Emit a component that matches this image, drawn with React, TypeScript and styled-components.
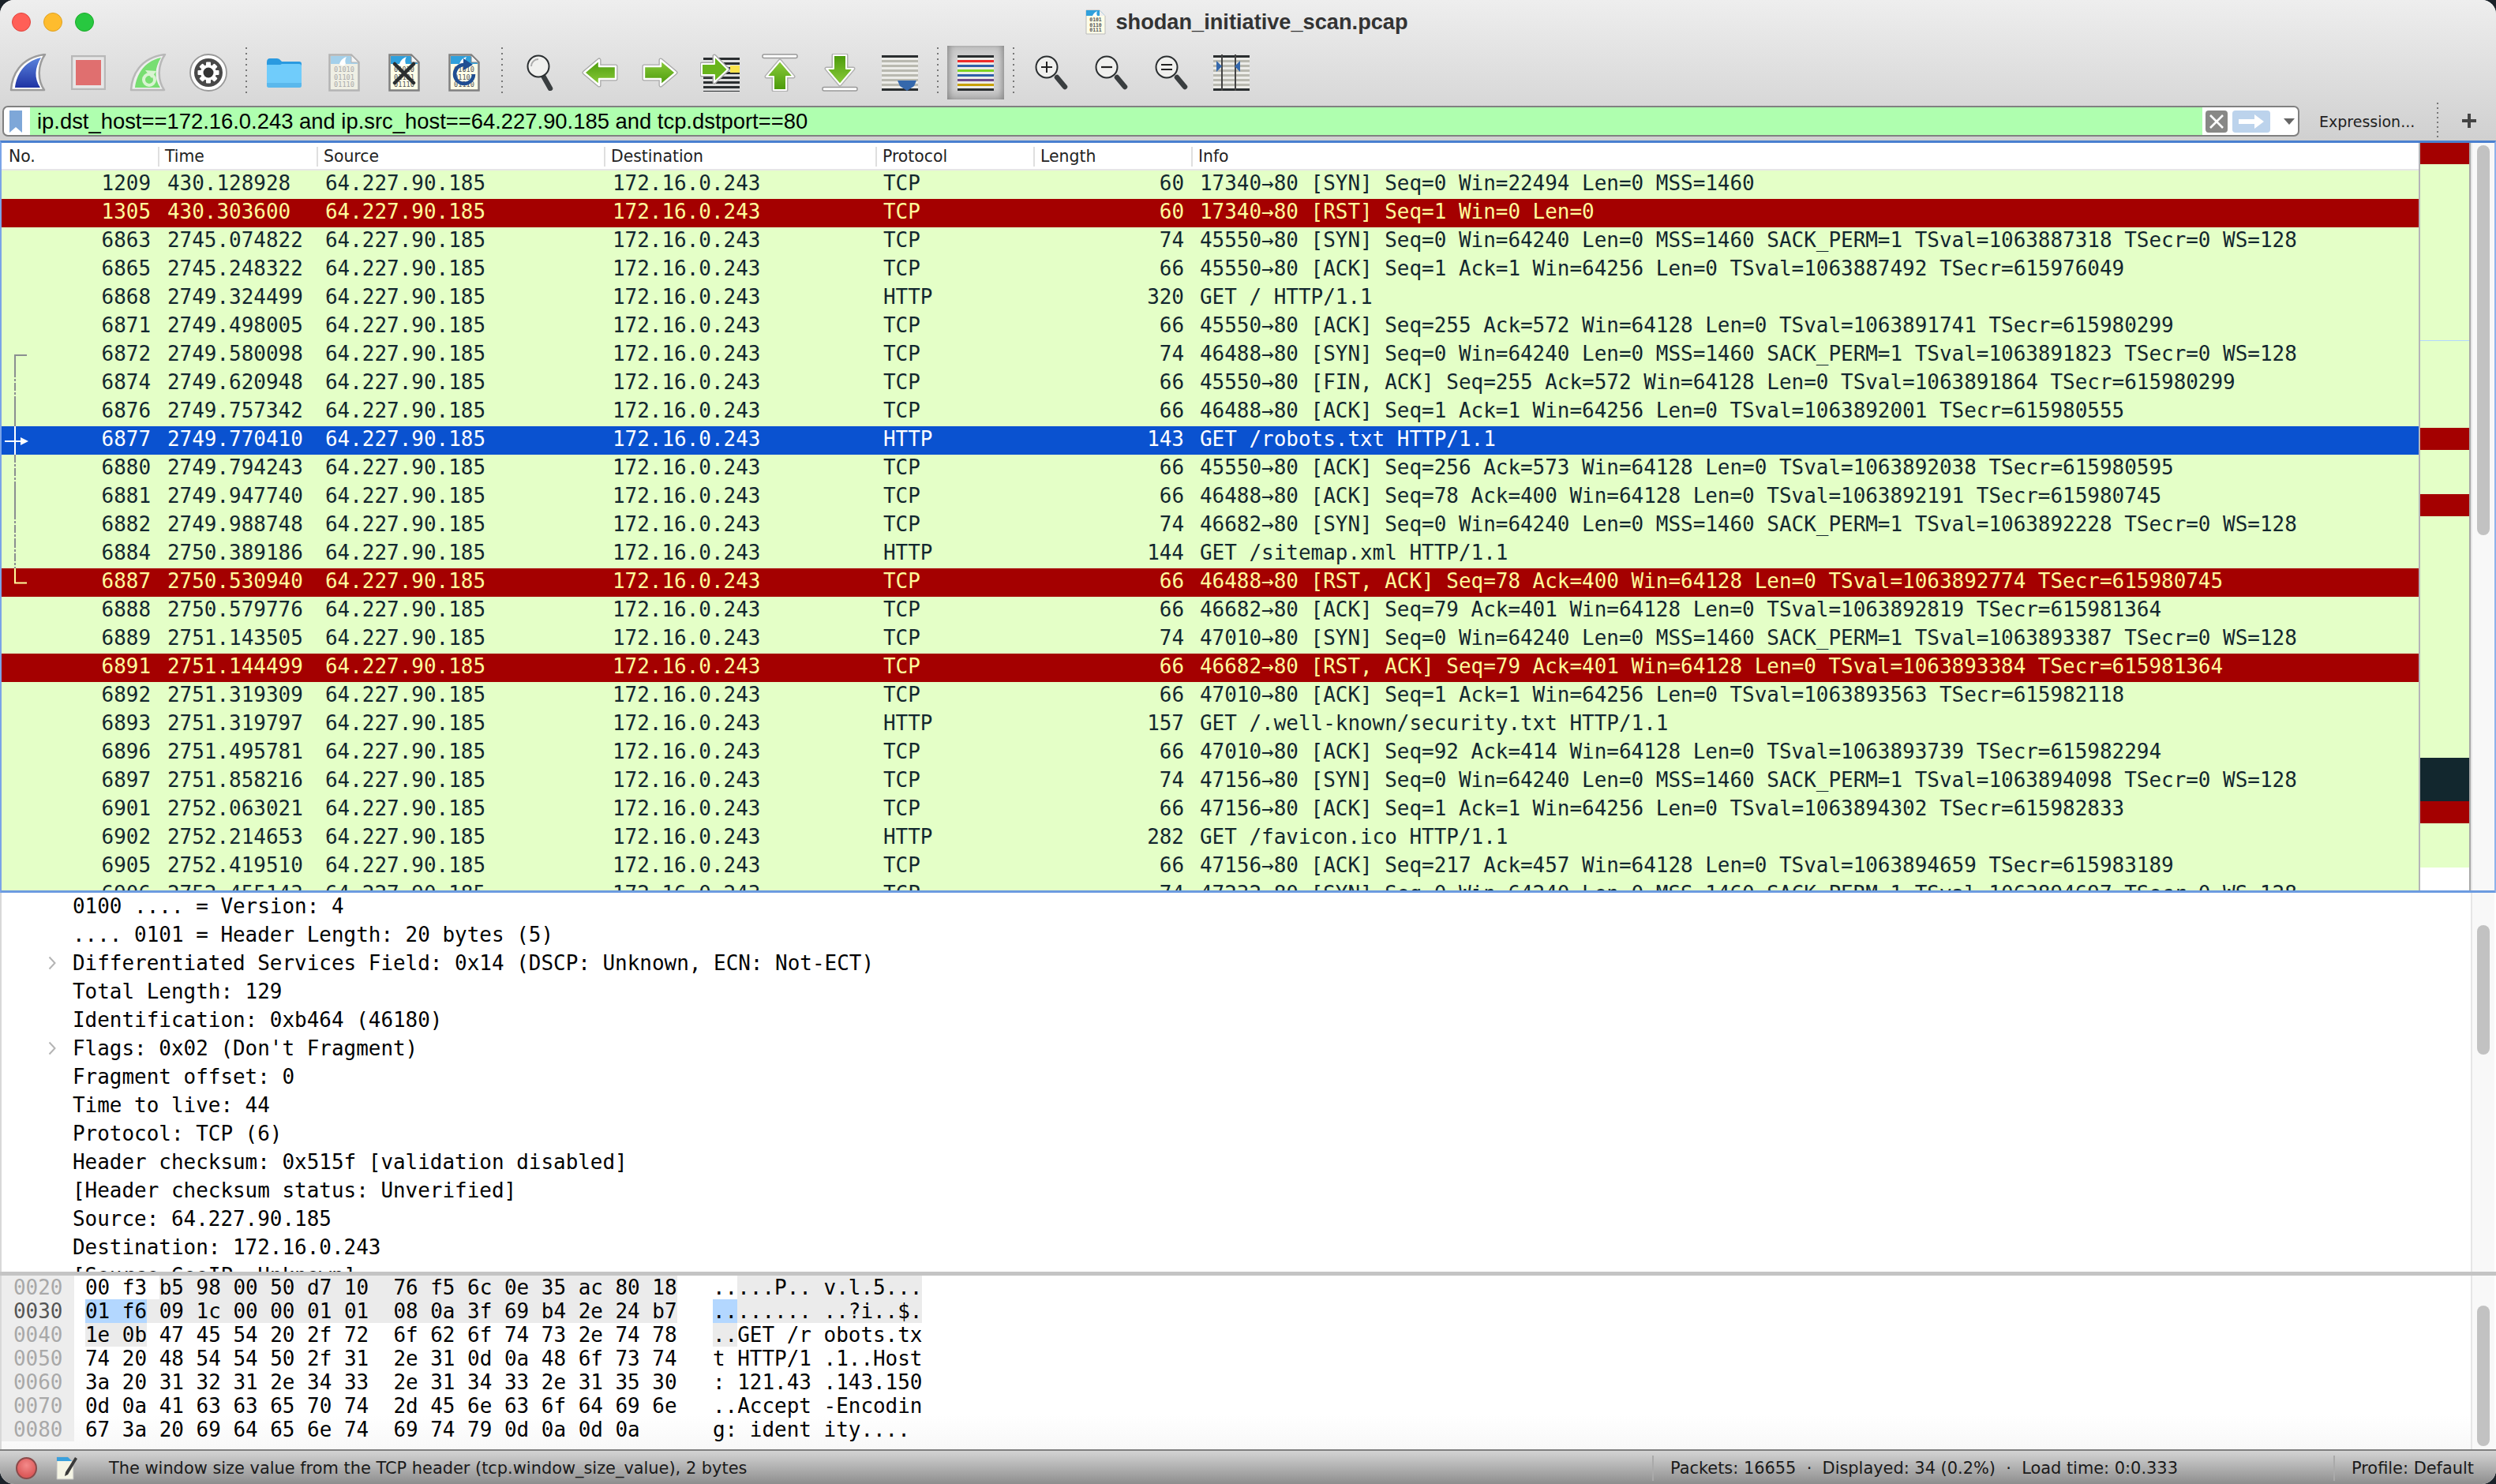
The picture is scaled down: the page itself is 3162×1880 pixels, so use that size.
import React from "react";
import styled, { createGlobalStyle } from "styled-components";

const Global = createGlobalStyle`
  html, body { margin: 0; padding: 0; background: #1b2229; }
  #root { width: 3162px; height: 1880px; }
  * { box-sizing: border-box; }
`;

const mono = `"DejaVu Sans Mono", "Liberation Mono", monospace`;
const sans = `"DejaVu Sans", "Liberation Sans", sans-serif`;
const helv = `"Liberation Sans", Arial, sans-serif`;

const Win = styled.div`
  width: 3162px; height: 1880px; display: flex; flex-direction: column;
  background: #fff; border-radius: 18px; overflow: hidden;
`;
const Chrome = styled.div`
  height: 178px; display: flex; flex-direction: column; flex: none;
  background: linear-gradient(#eeeeee, #d0d0d0);
`;
const TitleBar = styled.div`
  height: 56px; flex: none; display: grid; grid-template-columns: 1fr auto 1fr; align-items: center;
`;
const Lights = styled.div`display: flex; gap: 16px; padding-left: 15px;`;
const Light = styled.span<{ $c: string; $b: string }>`
  width: 24px; height: 24px; border-radius: 50%; background: ${p => p.$c}; border: 1px solid ${p => p.$b};
`;
const Title = styled.div`
  display: flex; align-items: center; gap: 12px; font: bold 27.2px ${helv}; color: #333; padding-right: 3px;
`;
const Toolbar = styled.div`height: 74px; flex: none; display: flex; align-items: flex-start; gap: 4px; padding-top: 2px;`;
const Slot = styled.div<{ $pressed?: boolean }>`
  width: 72px; height: 68px; flex: none; display: flex; align-items: center; justify-content: center;
  ${p => p.$pressed ? `background: linear-gradient(#c4c4c4, #d4d4d4 30%, #d0d0d0 80%, #b0b0b0); box-shadow: inset 6px 0 8px -4px #808080, inset -6px 0 8px -4px #808080;` : ""}
`;
const Sep = styled.div`
  width: 16px; height: 62px; flex: none; align-self: flex-start; margin-top: 2px;
  background: repeating-linear-gradient(#777 0 2px, transparent 2px 7px) center / 2px 100% no-repeat;
`;
const FilterRow = styled.div`height: 48px; flex: none; display: flex; align-items: flex-start; padding: 4px 0 0 3px;`;
const FilterBox = styled.div`
  width: 2910px; height: 39px; flex: none; display: flex; align-items: stretch;
  background: #fff; border: 2px solid #808080; border-radius: 7px; overflow: hidden;
`;
const BookBtn = styled.div`width: 33px; flex: none; display: flex; align-items: center; justify-content: center; padding-right: 3px;`;
const FilterText = styled.div`
  flex: 1; background: #afffaf; font: 27.4px/35px ${helv}; color: #000; padding-left: 9px; white-space: pre;
`;
const BoxBtns = styled.div`width: 121px; flex: none; display: flex; align-items: center; padding-left: 4px; gap: 6px;`;
const ClearBtn = styled.div`
  width: 28px; height: 28px; border-radius: 4px; background: #888886; display: flex; align-items: center; justify-content: center;
`;
const ApplyBtn = styled.div`
  width: 48px; height: 28px; border-radius: 4px; background: #bcd3ec; display: flex; align-items: center; justify-content: center;
`;
const Caret = styled.div`
  margin-left: 11px; width: 0; height: 0;
  border-left: 7px solid transparent; border-right: 7px solid transparent; border-top: 8px solid #666;
`;
const Expr = styled.div`
  width: 174px; flex: none; padding: 5px 0 0 25px; font: 19px/30px ${sans}; color: #222; white-space: pre;
`;
const FilterSep = styled.div`
  width: 2px; height: 44px; flex: none; margin-top: -4px;
  background: repeating-linear-gradient(#777 0 2px, transparent 2px 6px);
`;
const Plus = styled.div`flex: 1; display: flex; justify-content: center; padding-top: 10px; padding-left: 5px;`;

const ListPane = styled.div`
  height: 954px; flex: none; display: flex;
  border-top: 3px solid #4a80d0; border-bottom: 4px solid #6c9be0; border-left: 2px solid #7aa4e8; border-right: 2px solid #8fb2ea;
`;
const ListCol = styled.div`width: 3062px; flex: none; display: flex; flex-direction: column; overflow: hidden;`;
const cols = "198px 201px 364px 344px 200px 200px 1fr";
const Header = styled.div`
  height: 35px; flex: none; display: grid; grid-template-columns: ${cols}; background: #fff;
  border-bottom: 2px solid #e6e6e6;
`;
const HCell = styled.div<{ $first?: boolean }>`
  font: 20.4px/27px ${sans}; color: #222; padding: 4px 0 0 9px; position: relative;
  &::before { content: ""; display: ${p => p.$first ? "none" : "block"}; position: absolute; left: 0; top: 5px; bottom: 3px; width: 2px; background: #dfdfdf; }
`;
const Rows = styled.div`flex: 1; overflow: hidden;`;
const Row = styled.div<{ $kind: string }>`
  height: 36px; display: grid; grid-template-columns: ${cols}; white-space: pre;
  font: 25.94px/33px ${mono};
  background: ${p => p.$kind === "red" ? "#a40000" : p.$kind === "sel" ? "#0a52d0" : "#e4ffc7"};
  color: ${p => p.$kind === "red" ? "#fffc9c" : p.$kind === "sel" ? "#fff" : "#12272e"};
`;
const Cell = styled.div<{ $right?: boolean; $pl?: number }>`
  position: relative; overflow: hidden;
  padding: 0 ${p => p.$right ? 9 : 0}px 0 ${p => p.$pl ?? 0}px;
  text-align: ${p => p.$right ? "right" : "left"};
`;
const Conv = styled.svg`position: absolute; left: 0; top: 0; display: block;`;

const Overview = styled.div`
  width: 66px; flex: none; display: flex; flex-direction: column; background: #fff;
  border-left: 2px solid #b4b4b8; border-right: 2px solid #a8a8a8;
`;
const Seg = styled.div<{ $h: number; $c: string }>`height: ${p => p.$h}px; flex: none; background: ${p => p.$c};`;
const Track = styled.div<{ $top: number }>`
  width: 30px; flex: none; background: #f8f8f8; border-left: 2px solid #e6e6e6; padding: ${p => p.$top}px 0 0 6px;
`;
const Thumb = styled.div<{ $h: number }>`width: 16px; height: ${p => p.$h}px; border-radius: 8px; background: #c2c2c2;`;

const DetailPane = styled.div`height: 480px; flex: none; display: flex; overflow: hidden; border-left: 2px solid #d8d8d8; justify-content: space-between; padding-right: 2px; background: #fff; margin-top: -1px;`;
const DetailList = styled.div`flex: 1; overflow: hidden;`;
const DetailRow = styled.div`
  height: 36px; display: flex; font: 25.94px/35px ${mono}; color: #000; white-space: pre;
`;
const Gutter = styled.div`width: 90px; flex: none; display: flex; align-items: center; justify-content: flex-end; padding-right: 21px; padding-bottom: 2px;`;

const Splitter = styled.div`height: 5px; flex: none; background: #c4c4c4;`;
const HexPane = styled.div`height: 220px; flex: none; display: flex; overflow: hidden; background: linear-gradient(#fff 80%, #f8f8f8); justify-content: space-between; padding-right: 2px; border-left: 2px solid #d8d8d8;`;
const HexList = styled.div`flex: 1; overflow: hidden;`;
const HexRow = styled.div`display: flex; height: 30px; font: 25.94px/30px ${mono}; white-space: pre; color: #000;`;
const Offset = styled.div<{ $active?: boolean }>`
  width: 92px; flex: none; background: #ededed; padding-left: 15px; color: ${p => p.$active ? "#555" : "#a8a8a8"};
`;
const HexBytes = styled.div`width: 809px; flex: none; padding-left: 14px;`;
const Hl = styled.span<{ $k?: string }>`
  display: inline-block; height: 30px;
  background: ${p => p.$k === "b" ? "#b3d7ff" : p.$k === "g" ? "#ebebeb" : "transparent"};
`;
const Status = styled.div`
  height: 44px; flex: none; display: flex; align-items: center; position: relative; padding-top: 1px;
  border-top: 2px solid #7f7f7f; background: linear-gradient(#d4d4d4, #8e8e8e);
  font: 20.9px/24px ${sans}; color: #1a1a1a; white-space: pre;
`;
const Led = styled.div`
  width: 27px; height: 28px; border-radius: 50%; margin-left: 20px; flex: none;
  background: radial-gradient(circle at 50% 35%, #f48a8a, #dc5a5a 70%); border: 2px solid #8a4a4a;
`;
const Pen = styled.div`width: 30px; margin-left: 24px; flex: none; display: flex;`;
const StatusMsg = styled.div`margin-left: 37px; width: 1955px; flex: none;`;
const StatusSep = styled.div`width: 2px; height: 32px; background: #aaa; flex: none;`;
const Stats = styled.div`margin-left: 21px; width: 840px; flex: none;`;
const Profile = styled.div`margin-left: 21px;`;

/* ---------- icons ---------- */
const FIN = "M2 46 C3 28 13 5 45 1 C36 14 35 33 44 46 Z";
const FIN_IN = "M7 43 C9 28 17 10 40 5 C32 18 31 31 39 43 Z";
const StartIcon = () => (
  <svg width="48" height="48" viewBox="0 0 48 48">
    <defs><linearGradient id="fb" x1="0" y1="0" x2="0" y2="1"><stop offset="0" stopColor="#5a83dc" /><stop offset="1" stopColor="#1f33a4" /></linearGradient></defs>
    <path d={FIN} fill="#fff" stroke="#9c9c9c" strokeWidth="2.5" strokeLinejoin="round" />
    <path d={FIN_IN} fill="url(#fb)" />
  </svg>
);
const StopIcon = () => (
  <svg width="44" height="44" viewBox="0 0 44 44">
    <rect x="1" y="1" width="42" height="42" fill="#e6e6e6" stroke="#b8b8b8" strokeWidth="2.5" />
    <rect x="6" y="6" width="32" height="32" fill="#e06f6f" />
  </svg>
);
const RestartIcon = () => (
  <svg width="48" height="48" viewBox="0 0 48 48">
    <path d={FIN} fill="#eee" stroke="#b8b8b8" strokeWidth="2.5" strokeLinejoin="round" />
    <path d={FIN_IN} fill="#78de72" />
    <circle cx="25" cy="33" r="7" fill="none" stroke="#d9f4d2" strokeWidth="4" />
    <path d="M20 21 L34 22 L28 31 Z" fill="#d9f4d2" />
  </svg>
);
const GearIcon = () => {
  const teeth = Array.from({ length: 8 }, (_, i) => i * 45);
  return (
    <svg width="48" height="48" viewBox="0 0 48 48">
      <circle cx="24" cy="24" r="23" fill="#fff" stroke="#999" strokeWidth="1.8" />
      <circle cx="24" cy="24" r="18" fill="#484848" />
      {teeth.map(a => <rect key={a} x="21" y="10.5" width="6" height="6" rx="1" fill="#fff" transform={`rotate(${a} 24 24)`} />)}
      <circle cx="24" cy="24" r="10" fill="#fff" />
      <circle cx="24" cy="24" r="6.5" fill="#333" />
    </svg>
  );
};
const FolderIcon = () => (
  <svg width="46" height="40" viewBox="0 0 46 40">
    <path d="M1 7 Q1 2 5 2 L14 2 Q17 2 19 5 L20 6 L42 6 Q45 6 45 9 L45 14 L1 14 Z" fill="#2a9ae0" />
    <path d="M1 10 L18 10 L20 9 L42 9 Q45 9 45 12 L45 36 Q45 39 42 39 L4 39 Q1 39 1 36 Z" fill="#70ccfb" />
    <path d="M1 36 Q1 39 4 39 L42 39 Q45 39 45 36 L45 33 L1 33 Z" fill="#5ab8ec" />
  </svg>
);
const Doc: React.FC<{ id: string; faded?: boolean; children?: React.ReactNode }> = ({ id, faded, children }) => {
  const stroke = faded ? "#b4b4b4" : "#808080";
  const paper = faded ? "#efefe4" : "#fdfde8";
  const top = faded ? "#a4d0ea" : "#30a0dc";
  const ink = faded ? "#aaa" : "#555";
  return (
    <svg width="40" height="48" viewBox="0 0 40 48">
      <path d="M1.5 1.5 L29 1.5 L38.5 11 L38.5 46.5 L1.5 46.5 Z" fill={paper} stroke={stroke} strokeWidth="2.5" />
      <path d="M3 3 L28 3 L37 12 L37 13 L3 13 Z" fill={top} />
      <path d="M29 2 L29 11 L38 11 Z" fill="#f4f4f4" stroke={stroke} strokeWidth="1" />
      <path d="M14 13 C16 7 20 5 23 4 C21 7 21 10 22 13 C19 16 17 16 14 13 Z" fill="#fff" />
      {["01010", "01101", "01110"].map((t, i) => (
        <text key={t + id} x="20" y={23 + i * 9.5} textAnchor="middle" fontFamily={mono} fontSize="8.6" fill={ink}>{t}</text>
      ))}
      {children}
    </svg>
  );
};
const ARROW = "M3 11 L24 11 L24 3 L43 19 L24 35 L24 27 L3 27 Z";
const ArrowShape: React.FC<{ rot: number; id: string }> = ({ rot, id }) => (
  <svg width="46" height="38" viewBox="0 0 46 38">
    <defs><linearGradient id={id} x1="0" y1="0" x2="0" y2="1"><stop offset="0" stopColor="#8ccc3c" /><stop offset="1" stopColor="#4a9a0a" /></linearGradient></defs>
    <g transform={`rotate(${rot} 23 19)`}>
      <path d={ARROW} fill="none" stroke="#a8a8a8" strokeWidth="5" strokeLinejoin="round" />
      <path d={ARROW} fill={`url(#${id})`} stroke="#fff" strokeWidth="2.4" strokeLinejoin="round" />
    </g>
  </svg>
);
const Lines: React.FC<{ rows: string[]; children?: React.ReactNode; w?: number }> = ({ rows, children, w = 46 }) => (
  <svg width={w} height="46" viewBox={`0 0 ${w} 46`}>
    <rect x="0" y="1" width={w} height="44" fill="#ecece8" />
    {rows.map((c, i) => <rect key={i} x={w - 46} y={1 + i * 6} width="46" height="3" fill={c} />)}
    {children}
  </svg>
);
const GotoIcon = () => (
  <svg width="50" height="48" viewBox="0 0 50 48">
    {Array.from({ length: 8 }, (_, i) => <rect key={i} x="4" y={5 + i * 6} width="46" height="3" fill="#2a2e30" />)}
    <rect x="38" y="15" width="12" height="9" fill="#fbe44c" />
    <path d="M2 13 L18 13 L18 3 L35 20 L18 36 L18 27 L2 27 Z" fill="none" stroke="#a8a8a8" strokeWidth="5" strokeLinejoin="round" />
    <path d="M2 13 L18 13 L18 3 L35 20 L18 36 L18 27 L2 27 Z" fill="#68b41c" stroke="#fff" strokeWidth="2" strokeLinejoin="round" />
  </svg>
);
const UP = "M15 46 L15 29 L6 29 L23 9 L40 29 L31 29 L31 46 Z";
const FirstIcon: React.FC<{ down?: boolean; id: string }> = ({ down, id }) => (
  <svg width="46" height="48" viewBox="0 0 46 48">
    <defs><linearGradient id={id} x1="0" y1="0" x2="0" y2="1"><stop offset="0" stopColor="#8ccc3c" /><stop offset="1" stopColor="#4a9a0a" /></linearGradient></defs>
    <g transform={down ? "rotate(180 23 24)" : undefined}>
      <rect x="1" y="1" width="44" height="4.5" rx="2" fill="#fff" stroke="#999" strokeWidth="1.5" />
      <path d={UP} fill="none" stroke="#b0b0b0" strokeWidth="5" strokeLinejoin="round" />
      <path d={UP} fill={`url(#${id})`} stroke="#fff" strokeWidth="2" strokeLinejoin="round" />
    </g>
  </svg>
);
const GR = "#b9b9b0";
const DK = "#2a2e30";
const LastIcon = () => (
  <Lines rows={[DK, GR, GR, GR, GR, GR, GR, DK]}>
    <path d="M20 33 L44 33 L41 40 L32 46 L23 40 Z" fill="#3568ac" />
  </Lines>
);
const ColorIcon = () => (
  <Lines rows={[DK, "#ee2a2a", "#2f5fa8", "#7ed321", "#2f5fa8", "#6e4a8a", "#c8a000", DK]} />
);
const Mag: React.FC<{ sign?: string }> = ({ sign }) => (
  <svg width="42" height="44" viewBox="0 0 42 44">
    <line x1="28" y1="28" x2="38" y2="40" stroke="#3a3e40" strokeWidth="6.5" strokeLinecap="round" />
    <circle cx="15" cy="15" r="13.5" fill="#f0f0ee" stroke="#2a2e30" strokeWidth="2" />
    {sign === "+" && <path d="M8 15 H22 M15 8 V22" stroke="#222" strokeWidth="2" />}
    {sign === "-" && <path d="M8 15 H22" stroke="#222" strokeWidth="2.2" />}
    {sign === "=" && <path d="M8 12 H22 M8 18 H22" stroke="#222" strokeWidth="2.2" />}
  </svg>
);
const SearchIcon = () => (
  <svg width="34" height="46" viewBox="0 0 34 46">
    <line x1="21" y1="27" x2="30" y2="43" stroke="#3a3e40" strokeWidth="6.5" strokeLinecap="round" />
    <circle cx="15" cy="15" r="13.5" fill="#f0f0ee" stroke="#2a2e30" strokeWidth="2" />
    <path d="M6 15 A9 9 0 0 1 15 6" fill="none" stroke="#aaa" strokeWidth="2" />
  </svg>
);
const ResizeIcon = () => (
  <Lines rows={[DK, GR, GR, GR, GR, GR, GR, DK]}>
    <rect x="10" y="0" width="2" height="46" fill="#444" />
    <rect x="27" y="0" width="2" height="46" fill="#444" />
    <path d="M4 8 L11 15 L4 22 Z" fill="#3568ac" />
    <path d="M34 8 L27 15 L34 22 Z" fill="#3568ac" />
  </Lines>
);
const TitleDoc = () => (
  <svg width="26" height="32" viewBox="0 0 26 32">
    <path d="M1 1 L18 1 L25 8 L25 31 L1 31 Z" fill="#fdfde8" stroke="#bbb" />
    <path d="M1 1 L18 1 L24 7 L24 8 L1 8 Z" fill="#30a0dc" />
    <path d="M9 8 C10 5 13 3 15 2 C14 4 14 6 15 8 Z" fill="#fff" />
    <path d="M18 1 L18 8 L25 8 Z" fill="#eee" />
    {["0101", "0110", "0111"].map((t, i) => <text key={t} x="13" y={15 + i * 6.6} textAnchor="middle" fontFamily={mono} fontSize="6.4" fill="#555">{t}</text>)}
  </svg>
);
const Chevron = () => (
  <svg width="10" height="18" viewBox="0 0 10 18"><path d="M1.5 1.5 L8.5 9 L1.5 16.5" fill="none" stroke="#b4b4b4" strokeWidth="2" /></svg>
);

/* ---------- data ---------- */
type Pkt = [string, string, string, string, string, string?, string?];
const packets: Pkt[] = [
  ["1209", "430.128928", "TCP", "60", "17340→80 [SYN] Seq=0 Win=22494 Len=0 MSS=1460"],
  ["1305", "430.303600", "TCP", "60", "17340→80 [RST] Seq=1 Win=0 Len=0", "red"],
  ["6863", "2745.074822", "TCP", "74", "45550→80 [SYN] Seq=0 Win=64240 Len=0 MSS=1460 SACK_PERM=1 TSval=1063887318 TSecr=0 WS=128"],
  ["6865", "2745.248322", "TCP", "66", "45550→80 [ACK] Seq=1 Ack=1 Win=64256 Len=0 TSval=1063887492 TSecr=615976049"],
  ["6868", "2749.324499", "HTTP", "320", "GET / HTTP/1.1"],
  ["6871", "2749.498005", "TCP", "66", "45550→80 [ACK] Seq=255 Ack=572 Win=64128 Len=0 TSval=1063891741 TSecr=615980299"],
  ["6872", "2749.580098", "TCP", "74", "46488→80 [SYN] Seq=0 Win=64240 Len=0 MSS=1460 SACK_PERM=1 TSval=1063891823 TSecr=0 WS=128", "", "start"],
  ["6874", "2749.620948", "TCP", "66", "45550→80 [FIN, ACK] Seq=255 Ack=572 Win=64128 Len=0 TSval=1063891864 TSecr=615980299", "", "dash"],
  ["6876", "2749.757342", "TCP", "66", "46488→80 [ACK] Seq=1 Ack=1 Win=64256 Len=0 TSval=1063892001 TSecr=615980555", "", "mid"],
  ["6877", "2749.770410", "HTTP", "143", "GET /robots.txt HTTP/1.1", "sel", "sel"],
  ["6880", "2749.794243", "TCP", "66", "45550→80 [ACK] Seq=256 Ack=573 Win=64128 Len=0 TSval=1063892038 TSecr=615980595", "", "dash"],
  ["6881", "2749.947740", "TCP", "66", "46488→80 [ACK] Seq=78 Ack=400 Win=64128 Len=0 TSval=1063892191 TSecr=615980745", "", "mid"],
  ["6882", "2749.988748", "TCP", "74", "46682→80 [SYN] Seq=0 Win=64240 Len=0 MSS=1460 SACK_PERM=1 TSval=1063892228 TSecr=0 WS=128", "", "dash"],
  ["6884", "2750.389186", "HTTP", "144", "GET /sitemap.xml HTTP/1.1", "", "dash"],
  ["6887", "2750.530940", "TCP", "66", "46488→80 [RST, ACK] Seq=78 Ack=400 Win=64128 Len=0 TSval=1063892774 TSecr=615980745", "red", "end"],
  ["6888", "2750.579776", "TCP", "66", "46682→80 [ACK] Seq=79 Ack=401 Win=64128 Len=0 TSval=1063892819 TSecr=615981364"],
  ["6889", "2751.143505", "TCP", "74", "47010→80 [SYN] Seq=0 Win=64240 Len=0 MSS=1460 SACK_PERM=1 TSval=1063893387 TSecr=0 WS=128"],
  ["6891", "2751.144499", "TCP", "66", "46682→80 [RST, ACK] Seq=79 Ack=401 Win=64128 Len=0 TSval=1063893384 TSecr=615981364", "red"],
  ["6892", "2751.319309", "TCP", "66", "47010→80 [ACK] Seq=1 Ack=1 Win=64256 Len=0 TSval=1063893563 TSecr=615982118"],
  ["6893", "2751.319797", "HTTP", "157", "GET /.well-known/security.txt HTTP/1.1"],
  ["6896", "2751.495781", "TCP", "66", "47010→80 [ACK] Seq=92 Ack=414 Win=64128 Len=0 TSval=1063893739 TSecr=615982294"],
  ["6897", "2751.858216", "TCP", "74", "47156→80 [SYN] Seq=0 Win=64240 Len=0 MSS=1460 SACK_PERM=1 TSval=1063894098 TSecr=0 WS=128"],
  ["6901", "2752.063021", "TCP", "66", "47156→80 [ACK] Seq=1 Ack=1 Win=64256 Len=0 TSval=1063894302 TSecr=615982833"],
  ["6902", "2752.214653", "HTTP", "282", "GET /favicon.ico HTTP/1.1"],
  ["6905", "2752.419510", "TCP", "66", "47156→80 [ACK] Seq=217 Ack=457 Win=64128 Len=0 TSval=1063894659 TSecr=615983189"],
  ["6906", "2752.455143", "TCP", "74", "47232→80 [SYN] Seq=0 Win=64240 Len=0 MSS=1460 SACK_PERM=1 TSval=1063894697 TSecr=0 WS=128"],
];

const ConvMark: React.FC<{ rel?: string }> = ({ rel }) => {
  if (!rel) return null;
  const gray = "#8a8f90";
  const x = 17;
  return (
    <Conv width="40" height="36" viewBox="0 0 40 36">
      {rel === "start" && <path d={`M32 18 H${x} V36`} fill="none" stroke={gray} strokeWidth="2" />}
      {rel === "mid" && <path d={`M${x} 0 V36`} stroke={gray} strokeWidth="2" />}
      {rel === "dash" && <path d={`M${x} 0 V36`} stroke={gray} strokeWidth="2" strokeDasharray="10 2 3 2" />}
      {rel === "sel" && (
        <g>
          <path d={`M${x} 0 V36`} stroke="#fff" strokeWidth="2" />
          <path d="M4 19 H26" stroke="#fff" strokeWidth="2" />
          <path d="M24 14 L34 19 L24 24 Z" fill="#fff" />
        </g>
      )}
      {rel === "end" && <path d={`M${x} 0 V18.5 H32`} fill="none" stroke="#fffc9c" strokeWidth="2" />}
    </Conv>
  );
};

const details: [string, boolean?][] = [
  ["0100 .... = Version: 4"],
  [".... 0101 = Header Length: 20 bytes (5)"],
  ["Differentiated Services Field: 0x14 (DSCP: Unknown, ECN: Not-ECT)", true],
  ["Total Length: 129"],
  ["Identification: 0xb464 (46180)"],
  ["Flags: 0x02 (Don't Fragment)", true],
  ["Fragment offset: 0"],
  ["Time to live: 44"],
  ["Protocol: TCP (6)"],
  ["Header checksum: 0x515f [validation disabled]"],
  ["[Header checksum status: Unverified]"],
  ["Source: 64.227.90.185"],
  ["Destination: 172.16.0.243"],
  ["[Source GeoIP: Unknown]"],
];

type HexPart = [string, string?];
const hexRows: { off: string; active?: boolean; hex: HexPart[]; asc: HexPart[] }[] = [
  { off: "0020", hex: [["00 f3 "], ["b5 98 00 50 d7 10  76 f5 6c 0e 35 ac 80 18", "g"]], asc: [[".."], ["...P.. v.l.5...", "g"]] },
  { off: "0030", active: true, hex: [["01 f6", "b"], [" 09 1c 00 00 01 01  08 0a 3f 69 b4 2e 24 b7", "g"]], asc: [["..", "b"], ["...... ..?i..$.", "g"]] },
  { off: "0040", hex: [["1e 0b", "g"], [" 47 45 54 20 2f 72  6f 62 6f 74 73 2e 74 78"]], asc: [["..", "g"], ["GET /r obots.tx"]] },
  { off: "0050", hex: [["74 20 48 54 54 50 2f 31  2e 31 0d 0a 48 6f 73 74"]], asc: [["t HTTP/1 .1..Host"]] },
  { off: "0060", hex: [["3a 20 31 32 31 2e 34 33  2e 31 34 33 2e 31 35 30"]], asc: [[": 121.43 .143.150"]] },
  { off: "0070", hex: [["0d 0a 41 63 63 65 70 74  2d 45 6e 63 6f 64 69 6e"]], asc: [["..Accept -Encodin"]] },
  { off: "0080", hex: [["67 3a 20 69 64 65 6e 74  69 74 79 0d 0a 0d 0a"]], asc: [["g: ident ity...."]] },
];

const overview: [number, string][] = [
  [27, "#a40000"], [223, "#e4ffc7"], [1, "#b3d7ff"], [110, "#e4ffc7"], [28, "#a40000"], [56, "#e4ffc7"], [28, "#a40000"],
  [306, "#e4ffc7"], [55, "#12272e"], [28, "#a40000"], [56, "#e4ffc7"],
];

export default function App() {
  return (
    <>
      <Global />
      <Win>
        <Chrome>
          <TitleBar>
            <Lights>
              <Light $c="#ff5f57" $b="#e0443e" />
              <Light $c="#febc2e" $b="#dea123" />
              <Light $c="#28c840" $b="#1aab29" />
            </Lights>
            <Title><TitleDoc />shodan_initiative_scan.pcap</Title>
            <div />
          </TitleBar>
          <Toolbar>
            <Slot><StartIcon /></Slot>
            <Slot><StopIcon /></Slot>
            <Slot><RestartIcon /></Slot>
            <Slot><GearIcon /></Slot>
            <Sep />
            <Slot><FolderIcon /></Slot>
            <Slot><Doc id="a" faded /></Slot>
            <Slot>
              <Doc id="b">
                <path d="M8 13 L32 37 M32 13 L8 37" stroke="#2a2e30" strokeWidth="4.5" strokeLinecap="round" />
              </Doc>
            </Slot>
            <Slot>
              <Doc id="c">
                <path d="M20 14 A12 12 0 1 0 32 26" fill="none" stroke="#1f4e92" strokeWidth="4.5" />
                <path d="M19 6 L31 14 L19 21 Z" fill="#1f4e92" />
              </Doc>
            </Slot>
            <Sep />
            <Slot><SearchIcon /></Slot>
            <Slot><ArrowShape rot={180} id="ga" /></Slot>
            <Slot><ArrowShape rot={0} id="gb" /></Slot>
            <Slot><GotoIcon /></Slot>
            <Slot><FirstIcon id="gc" /></Slot>
            <Slot><FirstIcon down id="gd" /></Slot>
            <Slot><LastIcon /></Slot>
            <Sep />
            <Slot $pressed><ColorIcon /></Slot>
            <Sep />
            <Slot><Mag sign="+" /></Slot>
            <Slot><Mag sign="-" /></Slot>
            <Slot><Mag sign="=" /></Slot>
            <Slot><ResizeIcon /></Slot>
          </Toolbar>
          <FilterRow>
            <FilterBox>
              <BookBtn>
                <svg width="16" height="28" viewBox="0 0 16 28"><path d="M0 0 H16 V28 L8 21 L0 28 Z" fill="#7ea7d8" /></svg>
              </BookBtn>
              <FilterText>ip.dst_host==172.16.0.243 and ip.src_host==64.227.90.185 and tcp.dstport==80</FilterText>
              <BoxBtns>
                <ClearBtn>
                  <svg width="20" height="20" viewBox="0 0 20 20"><path d="M2 2 L18 18 M18 2 L2 18" stroke="#fff" strokeWidth="2.6" /></svg>
                </ClearBtn>
                <ApplyBtn>
                  <svg width="34" height="20" viewBox="0 0 34 20"><path d="M1 7 H21 V1 L33 10 L21 19 V13 H1 Z" fill="#fff" /></svg>
                </ApplyBtn>
                <Caret />
              </BoxBtns>
            </FilterBox>
            <Expr>Expression...</Expr>
            <FilterSep />
            <Plus>
              <svg width="18" height="18" viewBox="0 0 18 18"><path d="M0 9 H18 M9 0 V18" stroke="#444" strokeWidth="4" /></svg>
            </Plus>
          </FilterRow>
        </Chrome>

        <ListPane>
          <ListCol>
            <Header>
              <HCell $first>No.</HCell>
              <HCell>Time</HCell>
              <HCell>Source</HCell>
              <HCell>Destination</HCell>
              <HCell>Protocol</HCell>
              <HCell>Length</HCell>
              <HCell>Info</HCell>
            </Header>
            <Rows>
              {packets.map(p => (
                <Row key={p[0]} $kind={p[5] || "green"}>
                  <Cell $right><ConvMark rel={p[6]} />{p[0]}</Cell>
                  <Cell $pl={12}>{p[1]}</Cell>
                  <Cell $pl={11}>64.227.90.185</Cell>
                  <Cell $pl={11}>172.16.0.243</Cell>
                  <Cell $pl={10}>{p[2]}</Cell>
                  <Cell $right>{p[3]}</Cell>
                  <Cell $pl={11}>{p[4]}</Cell>
                </Row>
              ))}
            </Rows>
          </ListCol>
          <Overview>
            {overview.map(([h, c], i) => <Seg key={i} $h={h} $c={c} />)}
          </Overview>
          <Track $top={3}><Thumb $h={494} /></Track>
        </ListPane>

        <DetailPane>
          <DetailList>
            {details.map(([t, exp]) => (
              <DetailRow key={t}>
                <Gutter>{exp && <Chevron />}</Gutter>
                {t}
              </DetailRow>
            ))}
          </DetailList>
          <Track $top={41}><Thumb $h={164} /></Track>
        </DetailPane>
        <Splitter />
        <HexPane>
          <HexList>
            {hexRows.map(r => (
              <HexRow key={r.off}>
                <Offset $active={r.active}>{r.off}</Offset>
                <HexBytes>{r.hex.map((h, i) => <Hl key={i} $k={h[1]}>{h[0]}</Hl>)}</HexBytes>
                <div>{r.asc.map((h, i) => <Hl key={i} $k={h[1]}>{h[0]}</Hl>)}</div>
              </HexRow>
            ))}
          </HexList>
          <Track $top={38}><Thumb $h={178} /></Track>
        </HexPane>
        <Status>
          <Led />
          <Pen>
            <svg width="28" height="30" viewBox="0 0 28 30">
              <path d="M1 1 H15 L22 8 V29 H1 Z" fill="#f4f4e4" stroke="#bbb" />
              <path d="M1 1 H15 L20 6 H1 Z" fill="#3aa0dc" />
              <path d="M12 20 L24 1 L27 3 L15 23 L11 25 Z" fill="#3a3a3a" />
            </svg>
          </Pen>
          <StatusMsg>The window size value from the TCP header (tcp.window_size_value), 2 bytes</StatusMsg>
          <StatusSep />
          <Stats>Packets: 16655  ·  Displayed: 34 (0.2%)  ·  Load time: 0:0.333</Stats>
          <StatusSep />
          <Profile>Profile: Default</Profile>
        </Status>
      </Win>
    </>
  );
}
